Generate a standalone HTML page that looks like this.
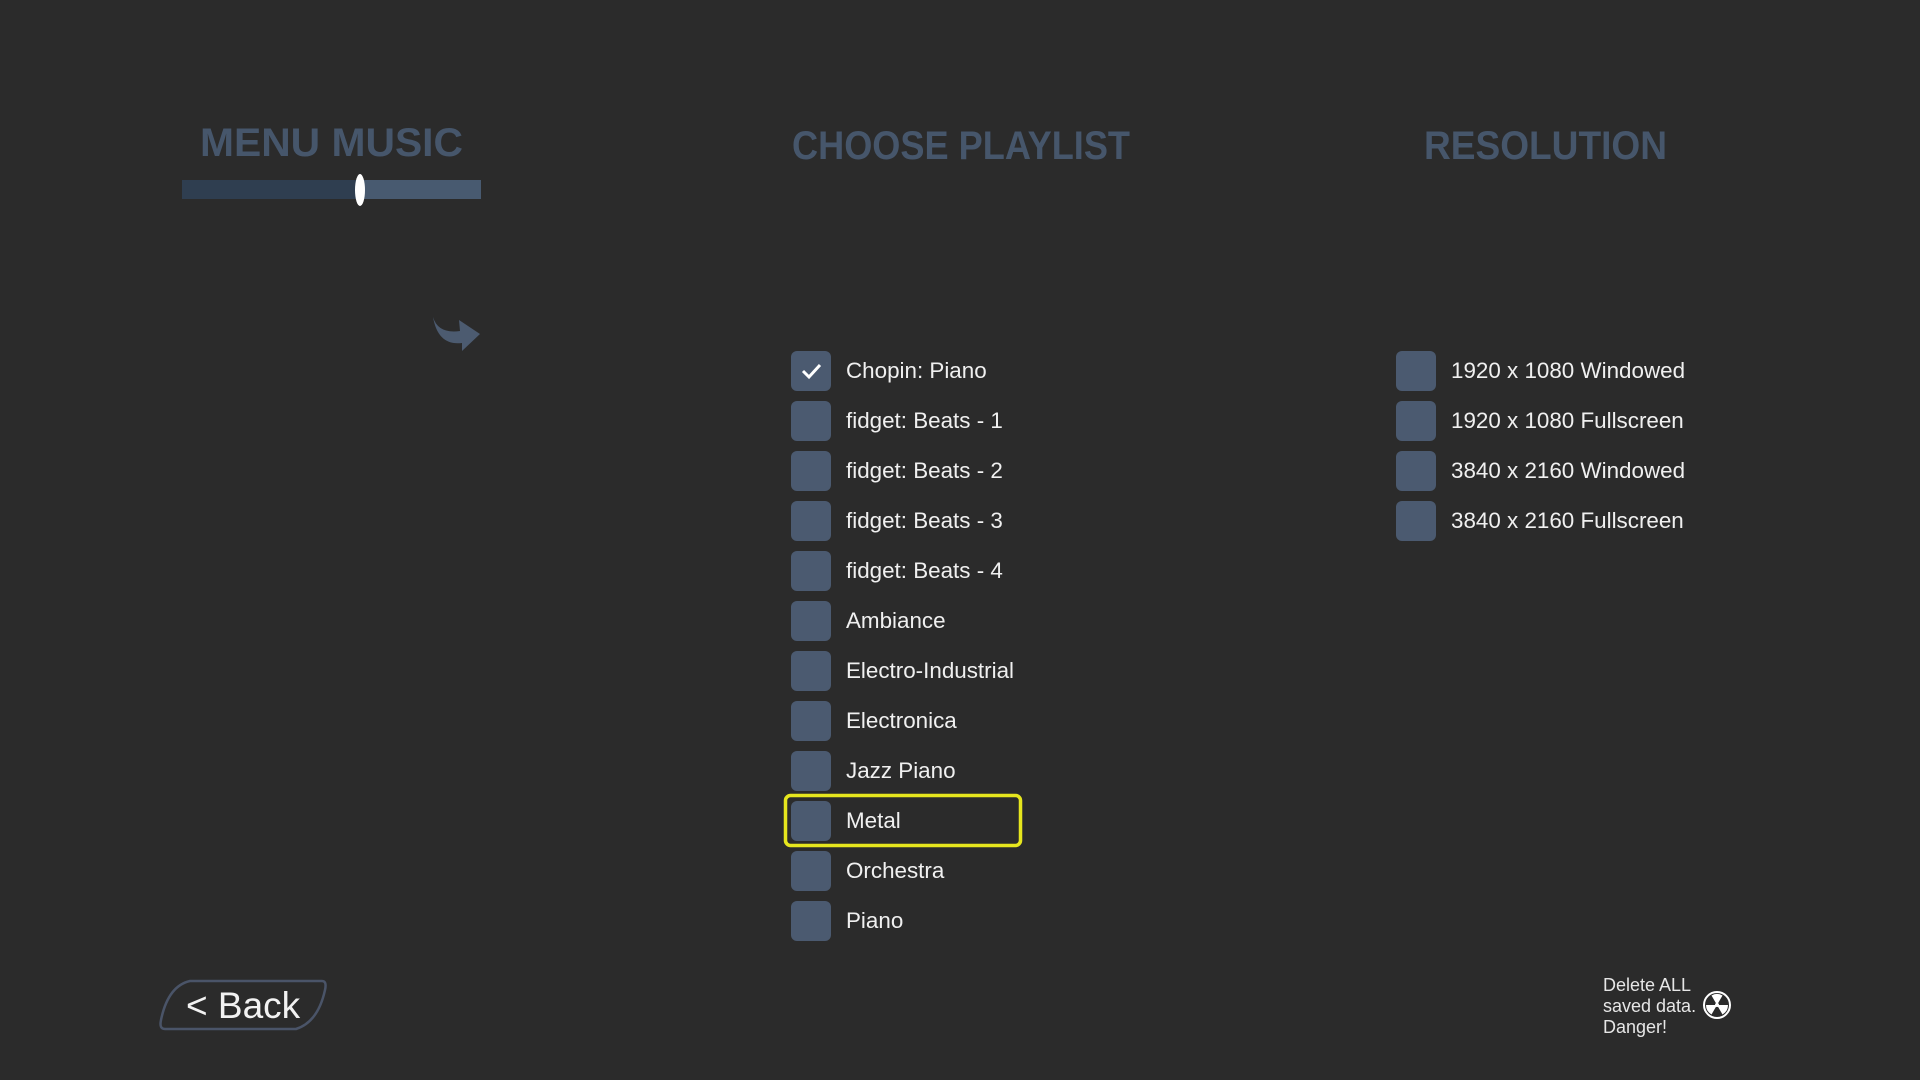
<!DOCTYPE html>
<html><head><meta charset="utf-8"><style>
html,body{margin:0;padding:0;background:#2b2b2b;width:1920px;height:1080px;overflow:hidden;font-family:"Liberation Sans",sans-serif;}
.abs{position:absolute;}
.cb{position:absolute;width:40px;height:40px;background:#4b5a70;border-radius:6px;}
.lbl{position:absolute;color:#f0f0f0;font-size:22.4px;line-height:40px;white-space:nowrap;}
</style></head><body>
<svg class="abs" style="left:0;top:0" width="1920" height="1080">
<g font-family="Liberation Sans, sans-serif" font-weight="bold" fill="#46566b" font-size="40">
<text x="200" y="156" textLength="263" lengthAdjust="spacingAndGlyphs">MENU MUSIC</text>
<text x="792" y="159" textLength="338" lengthAdjust="spacingAndGlyphs">CHOOSE PLAYLIST</text>
<text x="1424" y="159" textLength="243" lengthAdjust="spacingAndGlyphs">RESOLUTION</text>
</g>
<rect x="182" y="180" width="180" height="19" fill="#2f3e50"/>
<rect x="360" y="180" width="121" height="19" fill="#485a70"/>
<ellipse cx="360" cy="190" rx="5" ry="16" fill="#ffffff"/>
<path d="M433 317 Q438 334 460 331 L459 320 L480 334 L462 351 L462 343 Q438 346 433 317 Z" fill="#4c5b70"/>
<rect x="785.5" y="795.5" width="235" height="50" rx="5" fill="none" stroke="#e6e61e" stroke-width="3.5"/>
<path d="M190 981 L322 981 Q327 981 325 990 Q318 1022 296 1029 L165 1029 Q159 1029 161 1020 Q168 986 190 981 Z" fill="none" stroke="#4a5468" stroke-width="2.5"/>
<text x="186" y="1018" font-family="Liberation Sans, sans-serif" font-size="37" fill="#f2f2f2">&lt; Back</text>
<g font-family="Liberation Sans, sans-serif" font-size="18" fill="#e6e6e6">
<text x="1603" y="991">Delete ALL</text>
<text x="1603" y="1012">saved data.</text>
<text x="1603" y="1033">Danger!</text>
</g>
<circle cx="1717" cy="1005" r="13" fill="none" stroke="#fff" stroke-width="2"/>
<circle cx="1717" cy="1005" r="2" fill="#fff"/>
<path d="M1717 1005 L1711.5 995.5 A11 11 0 0 1 1722.5 995.5 Z M1717 1005 L1728 1005 A11 11 0 0 1 1722.5 1014.5 Z M1717 1005 L1711.5 1014.5 A11 11 0 0 1 1706 1005 Z" fill="#fff"/>
</svg>
<div class="cb" style="left:791px;top:351px"></div>
<svg class="abs" style="left:791px;top:351px" width="40" height="40"><path d="M12 20 L18 26 L29 14" fill="none" stroke="#fff" stroke-width="3"/></svg>
<div class="lbl" style="left:846px;top:351px">Chopin: Piano</div>
<div class="cb" style="left:791px;top:401px"></div><div class="lbl" style="left:846px;top:401px">fidget: Beats - 1</div>
<div class="cb" style="left:791px;top:451px"></div><div class="lbl" style="left:846px;top:451px">fidget: Beats - 2</div>
<div class="cb" style="left:791px;top:501px"></div><div class="lbl" style="left:846px;top:501px">fidget: Beats - 3</div>
<div class="cb" style="left:791px;top:551px"></div><div class="lbl" style="left:846px;top:551px">fidget: Beats - 4</div>
<div class="cb" style="left:791px;top:601px"></div><div class="lbl" style="left:846px;top:601px">Ambiance</div>
<div class="cb" style="left:791px;top:651px"></div><div class="lbl" style="left:846px;top:651px">Electro-Industrial</div>
<div class="cb" style="left:791px;top:701px"></div><div class="lbl" style="left:846px;top:701px">Electronica</div>
<div class="cb" style="left:791px;top:751px"></div><div class="lbl" style="left:846px;top:751px">Jazz Piano</div>
<div class="cb" style="left:791px;top:801px"></div><div class="lbl" style="left:846px;top:801px">Metal</div>
<div class="cb" style="left:791px;top:851px"></div><div class="lbl" style="left:846px;top:851px">Orchestra</div>
<div class="cb" style="left:791px;top:901px"></div><div class="lbl" style="left:846px;top:901px">Piano</div>
<div class="cb" style="left:1396px;top:351px"></div><div class="lbl" style="left:1451px;top:351px">1920 x 1080 Windowed</div>
<div class="cb" style="left:1396px;top:401px"></div><div class="lbl" style="left:1451px;top:401px">1920 x 1080 Fullscreen</div>
<div class="cb" style="left:1396px;top:451px"></div><div class="lbl" style="left:1451px;top:451px">3840 x 2160 Windowed</div>
<div class="cb" style="left:1396px;top:501px"></div><div class="lbl" style="left:1451px;top:501px">3840 x 2160 Fullscreen</div>
</body></html>
